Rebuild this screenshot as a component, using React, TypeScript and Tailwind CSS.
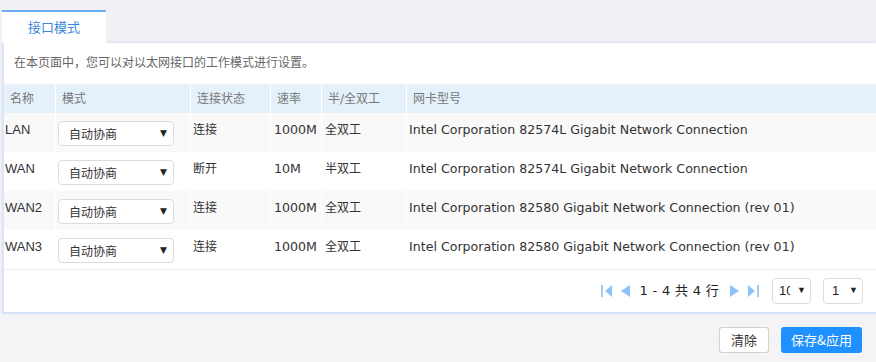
import React from "react";

const font = { fontFamily: '"DejaVu Sans", Verdana, "Noto Sans CJK SC", sans-serif' };

const rows = [
  { name: "LAN", status: "连接", rate: "1000M", duplex: "全双工", nic: "Intel Corporation 82574L Gigabit Network Connection" },
  { name: "WAN", status: "断开", rate: "10M", duplex: "半双工", nic: "Intel Corporation 82574L Gigabit Network Connection" },
  { name: "WAN2", status: "连接", rate: "1000M", duplex: "全双工", nic: "Intel Corporation 82580 Gigabit Network Connection (rev 01)" },
  { name: "WAN3", status: "连接", rate: "1000M", duplex: "全双工", nic: "Intel Corporation 82580 Gigabit Network Connection (rev 01)" },
];

const cols = "grid grid-cols-[52px_135px_80px_51px_85px_1fr]";

function Arrow({ dir, bar }: { dir: "l" | "r"; bar?: boolean }) {
  return (
    <svg width="14" height="16" viewBox="0 0 14 16">
      {dir === "l" ? (
        <>
          {bar && <rect x="1" y="2" width="2" height="12" fill="#9fcdf3" />}
          <polygon points={bar ? "12,2 12,14 5,8" : "12,2 12,14 3,8"} fill="#8ec4f2" />
        </>
      ) : (
        <>
          <polygon points={bar ? "2,2 2,14 9,8" : "2,2 2,14 11,8"} fill="#8ec4f2" />
          {bar && <rect x="11" y="2" width="2" height="12" fill="#9fcdf3" />}
        </>
      )}
    </svg>
  );
}

const cjk = { fontFamily: '"Noto Sans CJK SC", sans-serif' };

export default function App() {
  return (
    <div className="w-[876px] h-[362px] bg-[#f4f4f6] overflow-hidden text-[12px]" style={font}>
      {/* tab bar */}
      <div className="h-[43px] bg-[#f0f1f5] flex items-end pl-[2px]">
        <div className="relative w-[104px] h-[33px] bg-white border-t-2 border-[#6aaef0] flex items-center justify-center text-[13px] text-[#3b86e0] pb-[1px]" style={cjk}>
          接口模式
        </div>
      </div>
      {/* panel */}
      <div className="ml-[2px] bg-white border-l-2 border-[#dde5f5] shadow-[0_-1px_2px_#d6def0] border-b-2 border-b-[#d5e1f5]">
        <div className="h-[39px] flex items-center pl-[10px] text-[#666] pb-[2px]" style={cjk}>
          在本页面中，您可以对以太网接口的工作模式进行设置。
        </div>
        <div className="h-[3px] bg-gradient-to-b from-white to-[#eef2f8]" />
        <div className={`${cols} h-[28px] bg-[#e5f1fa] text-[#777] items-stretch`}>
          {["名称", "模式", "连接状态", "速率", "半/全双工", "网卡型号"].map((h, i) => (
            <div key={h} className={`flex items-center pl-[6px] ${i < 5 ? "border-r border-white" : ""}`}>
              {h}
            </div>
          ))}
        </div>
        {rows.map((r, idx) => (
          <div key={r.name} className={`${cols} h-[39px] text-[#333] ${idx % 2 === 0 ? "bg-[#f9f9f9]" : "bg-white"}`}>
            <div className={`flex items-center pl-[1px] pb-[5px] border-r ${idx % 2 === 0 ? "border-white" : "border-transparent"}`} style={{ fontFamily: '"Liberation Sans", Arial, sans-serif', fontSize: 13 }}>
              {r.name}
            </div>
            <div className={`flex items-center pl-[2px] border-r ${idx % 2 === 0 ? "border-white" : "border-transparent"}`}>
              <div className="w-[116px] h-[25px] mt-[2px] bg-white border border-[#dcdcdc] rounded-[4px] flex items-center justify-between pl-[10px] pr-[6px] text-[13px] text-[#333]">
                <span style={{ fontFamily: '"Noto Sans CJK SC", sans-serif', fontSize: 12 }}>自动协商</span>
                <span className="text-[9px] text-[#222]">▼</span>
              </div>
            </div>
            <div className={`flex items-center pl-[2px] pb-[5px] border-r ${idx % 2 === 0 ? "border-white" : "border-transparent"}`}>{r.status}</div>
            <div className={`flex items-center pl-[3px] pb-[5px] text-[12.6px] border-r ${idx % 2 === 0 ? "border-white" : "border-transparent"}`}>{r.rate}</div>
            <div className={`flex items-center pl-[3px] pb-[5px] border-r ${idx % 2 === 0 ? "border-white" : "border-transparent"}`}>{r.duplex}</div>
            <div className="flex items-center pl-[2px] pb-[5px] whitespace-nowrap text-[12.6px]">{r.nic}</div>
          </div>
        ))}
        <div className="h-[43px] border-t border-[#eeeeee] flex items-center justify-end pr-[13px]">
          <div className="flex items-center gap-[4px]">
            <Arrow dir="l" bar />
            <Arrow dir="l" />
          </div>
          <span className="ml-[8px] mr-[9px] text-[13px] text-[#222] tracking-[0.3px]" style={{ fontFamily: '"DejaVu Sans", "Noto Sans CJK SC", sans-serif' }}>
            1 - 4 共 4 行
          </span>
          <div className="flex items-center gap-[4px]">
            <Arrow dir="r" />
            <Arrow dir="r" bar />
          </div>
          <div className="ml-[12px] w-[39px] h-[26px] border border-[#dcdcdc] rounded-[4px] flex items-center justify-between pl-[6px] pr-[4px] text-[13px] text-[#222]" style={{ fontFamily: '"Liberation Sans", sans-serif' }}>
            <span className="w-[11px] overflow-hidden whitespace-nowrap">10</span>
            <span className="text-[9px]">▼</span>
          </div>
          <div className="ml-[12px] w-[40px] h-[26px] border border-[#dcdcdc] rounded-[4px] flex items-center justify-between pl-[8px] pr-[4px] text-[13px] text-[#222]" style={{ fontFamily: '"Liberation Sans", sans-serif' }}>
            <span>1</span>
            <span className="text-[9px]">▼</span>
          </div>
        </div>
      </div>
      {/* footer */}
      <div className="flex justify-end gap-[12px] pr-[14px] pt-[13px]">
        <div className="w-[50px] h-[26px] bg-white border border-[#d0d0d0] rounded-[3px] flex items-center justify-center text-[13px] text-[#333]" style={cjk}>
          清除
        </div>
        <div className="w-[81px] h-[26px] bg-[#1e90ff] rounded-[3px] flex items-center justify-center text-[13px] text-white" style={cjk}>
          保存&amp;应用
        </div>
      </div>
    </div>
  );
}
